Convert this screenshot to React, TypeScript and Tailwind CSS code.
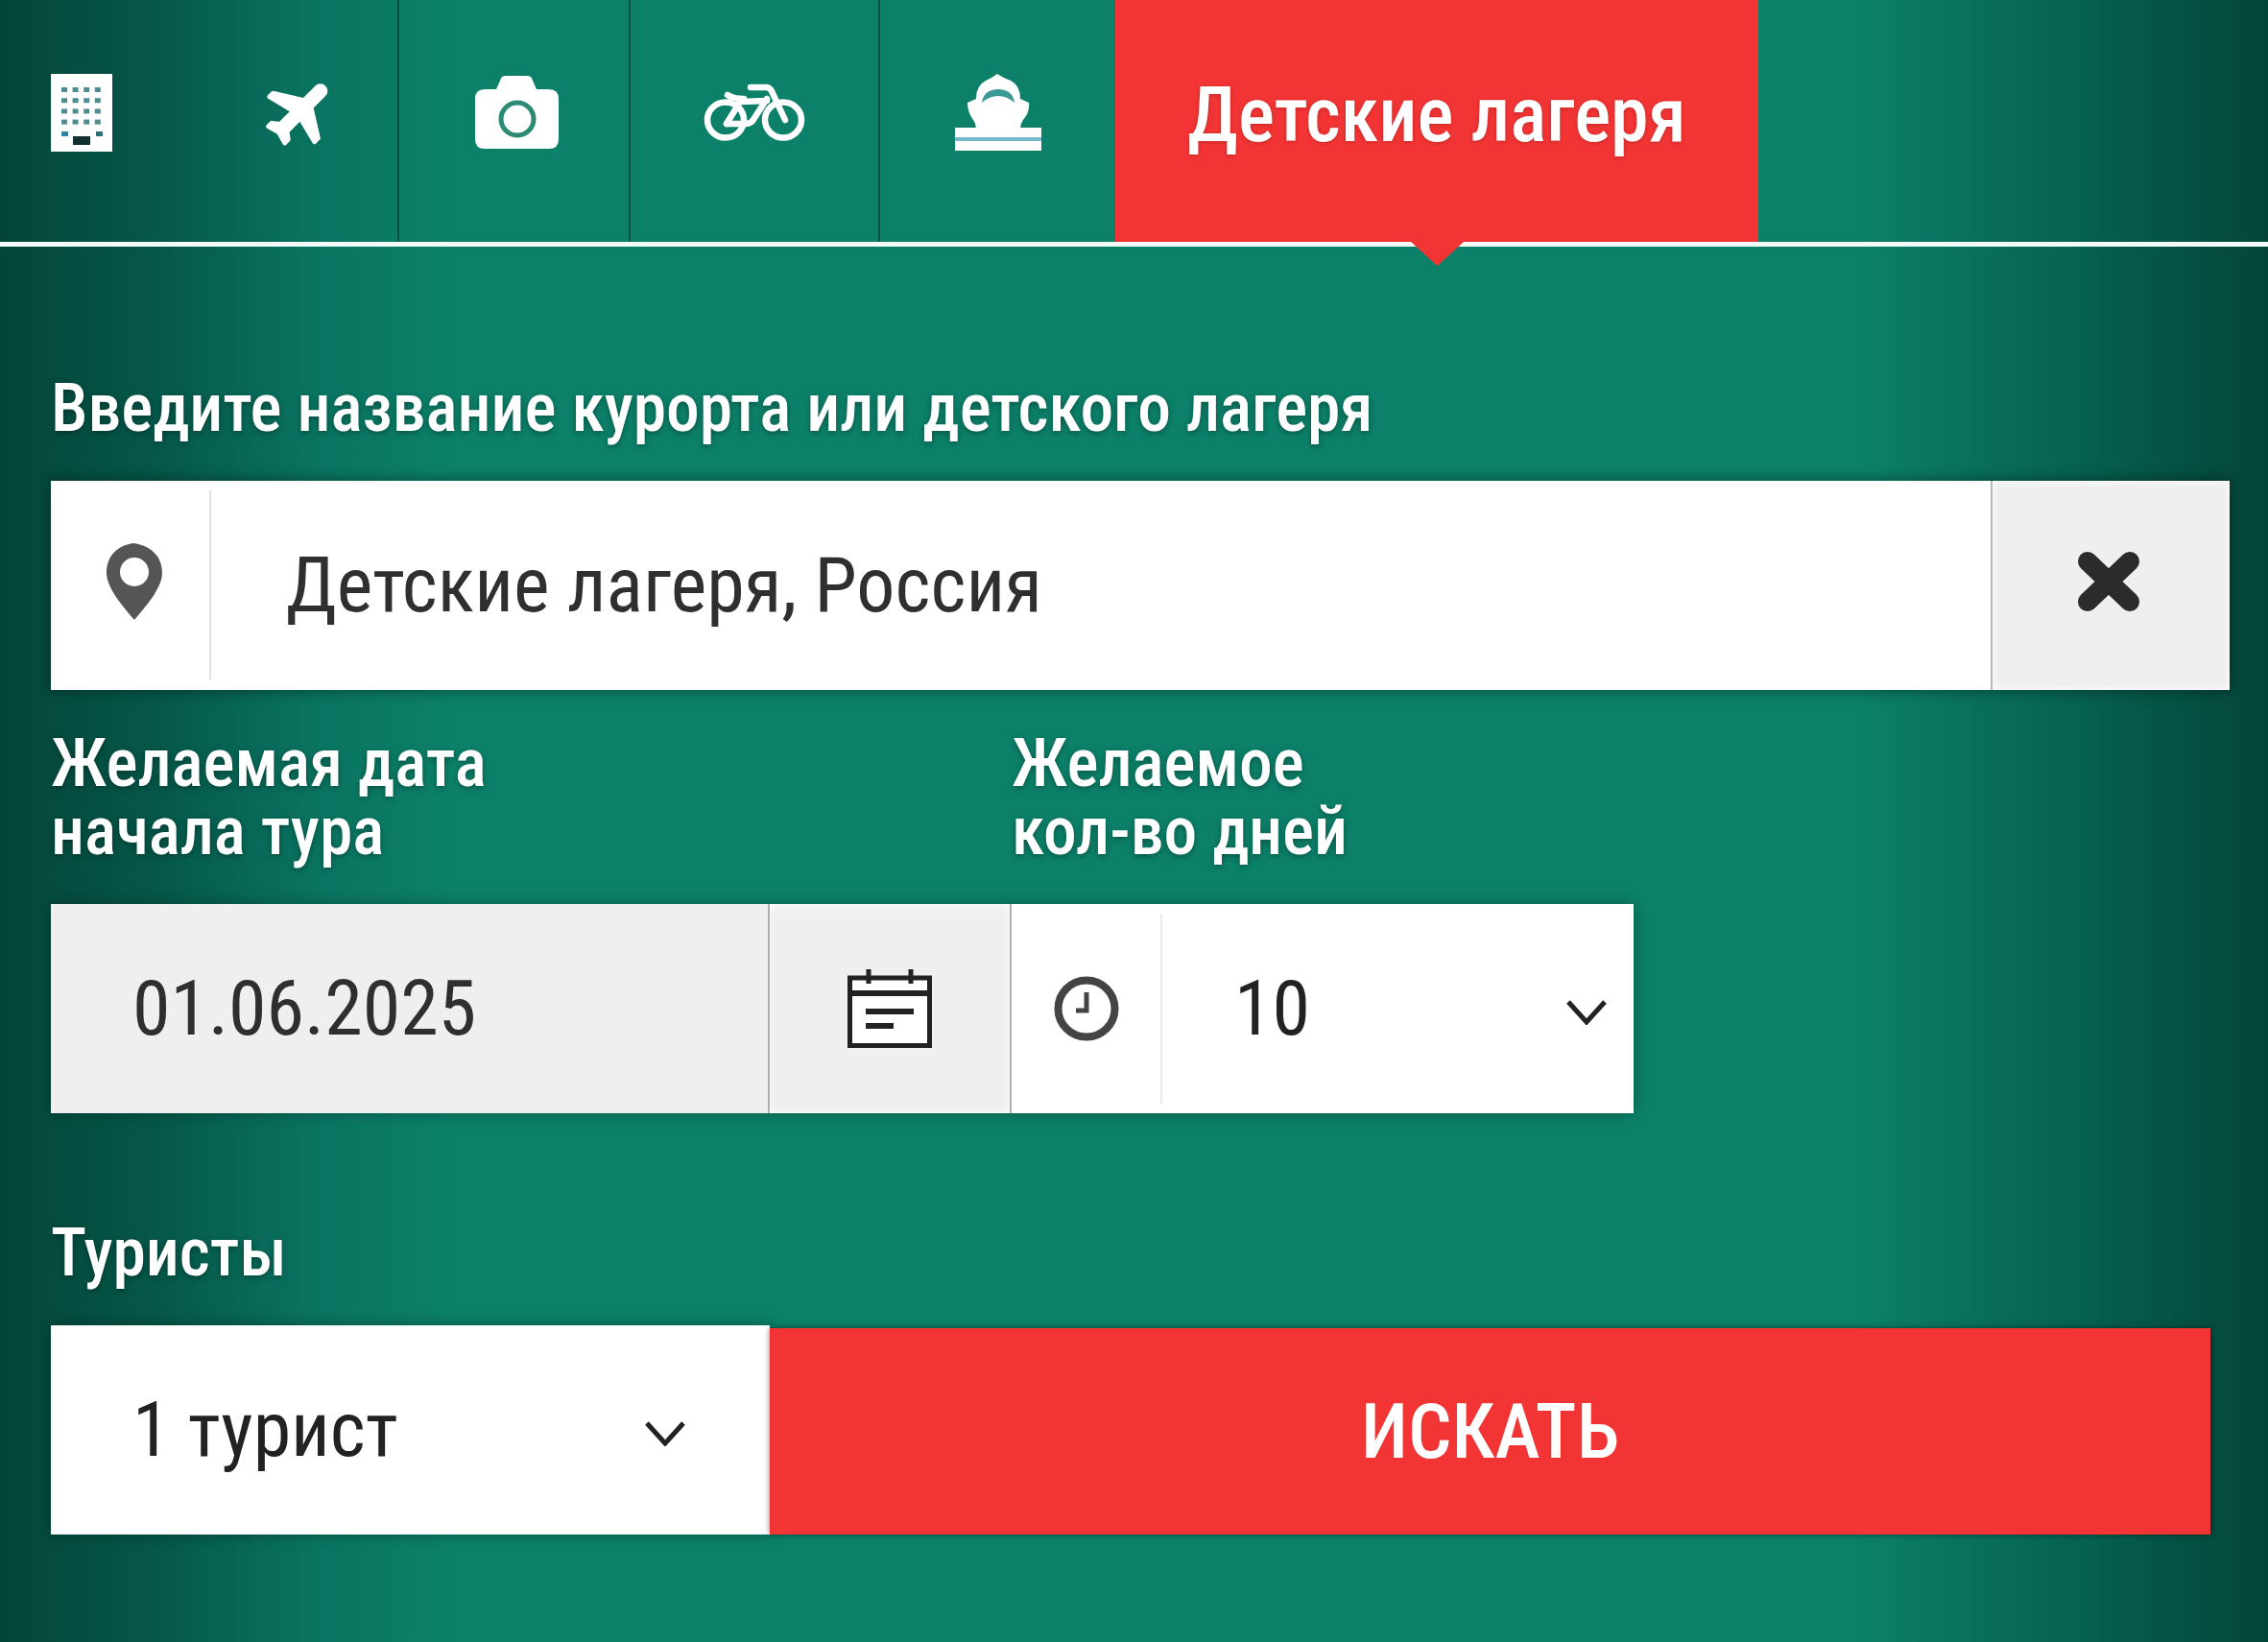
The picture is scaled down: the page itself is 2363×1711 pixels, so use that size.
import type { ReactNode } from 'react';

const fontClass = "font-['Roboto','Liberation_Sans',sans-serif] [font-stretch:75%]";

function HotelIcon() {
  const rows = [0, 1, 2, 3];
  const cols = [0, 1, 2, 3];
  return (
    <svg width="64" height="81" viewBox="0 0 64 81">
      <rect width="64" height="81" fill="#ffffff" />
      {rows.map((r) =>
        cols.map((c) => (
          <rect key={`${r}-${c}`} x={11 + c * 11.6} y={14 + r * 11.2} width="6" height="5" fill="#4f8c90" />
        )),
      )}
      <rect x="11" y="60" width="7" height="5" fill="#2f83a0" />
      <rect x="47" y="60" width="7" height="5" fill="#2f6f70" />
      <rect x="23" y="65" width="18" height="9" fill="#12302e" />
    </svg>
  );
}

function PlaneIcon() {
  return (
    <svg width="84" height="84" viewBox="0 0 24 24" className="rotate-45">
      <path
        d="M21 15.5v-1.6l-8-5V3.5c0-.83-.67-1.5-1.5-1.5S10 2.67 10 3.5v5.4l-8 5v1.6l8-2V19l-2 1.5V22l3.5-1 3.5 1v-1.5L13 19v-5.5z"
        fill="#ffffff"
        stroke="#ffffff"
        strokeWidth="1.3"
        strokeLinejoin="round"
      />
    </svg>
  );
}

function CameraIcon() {
  return (
    <svg width="87" height="76" viewBox="0 0 87 76">
      <path
        d="M10 14h12l4-9q1-5 6-5h22q5 0 6 5l4 9h13q10 0 10 10v42q0 10-10 10H10Q0 76 0 66V24q0-10 10-10z"
        fill="#ffffff"
      />
      <circle cx="44" cy="45" r="17" fill="#ffffff" stroke="#2c8a74" strokeWidth="5" />
    </svg>
  );
}

function BikeIcon() {
  return (
    <svg width="106" height="60" viewBox="0 0 106 60" fill="none" stroke="#ffffff" strokeWidth="6.5" strokeLinecap="round" strokeLinejoin="round">
      <ellipse cx="23" cy="38" rx="19" ry="18.5" />
      <ellipse cx="83" cy="38" rx="19" ry="18.5" />
      <path d="M24 42h20q6 0 9-6l13-20" />
      <path d="M24 42l14-23 28-1" />
      <path d="M49 4h16q4 0 6 4l14 30" />
      <path d="M25 12q6 4 17 4" />
    </svg>
  );
}

function ShipIcon() {
  return (
    <svg width="90" height="80" viewBox="0 0 90 80">
      <path
        d="M44 0q6 4 14 7 10 5 10 19l9 4q1 10-6 18-3 4-3 9H22q0-5-3-9-6-8-6-18l9-4Q22 12 32 7q7-3 12-7z"
        fill="#ffffff"
      />
      <path d="M28 30q2-14 17-14t17 14q-8-7-17-7t-17 7z" fill="#3b9a96" />
      <rect x="0" y="56" width="90" height="24" fill="#ffffff" />
      <rect x="0" y="66" width="90" height="4" fill="#75b9cc" />
    </svg>
  );
}

function PinIcon() {
  return (
    <svg width="60" height="80" viewBox="0 0 60 80">
      <path
        fillRule="evenodd"
        d="M29 0c16 2 30 12 30 31 0 16-18 36-29 49C19 67 1 47 1 31 1 12 14 2 29 0zm1 15a15 15 0 1 0 0 30 15 15 0 0 0 0-30z"
        fill="#555555"
      />
    </svg>
  );
}

function CloseIcon() {
  return (
    <svg width="70" height="66" viewBox="0 0 70 66" stroke="#2b2b2b" strokeWidth="20" strokeLinecap="round">
      <path d="M13 12l44 42M57 12L13 54" />
    </svg>
  );
}

function CalendarIcon() {
  return (
    <svg width="88" height="82" viewBox="0 0 88 82" fill="none" stroke="#222222">
      <rect x="2.5" y="9" width="83" height="70.5" strokeWidth="5" fill="#ffffff" />
      <path d="M2 25h84" strokeWidth="6" />
      <path d="M22 0v15M66 0v15" strokeWidth="5" />
      <path d="M19 44h50" strokeWidth="6" />
      <path d="M19 59h29" strokeWidth="6" />
    </svg>
  );
}

function ClockIcon() {
  return (
    <svg width="68" height="68" viewBox="0 0 68 68" fill="none" stroke="#444444">
      <circle cx="34" cy="34" r="29.5" strokeWidth="8" />
      <path d="M34 17v19H23" strokeWidth="5" />
    </svg>
  );
}

function ChevronIcon({ width, height }: { width: number; height: number }) {
  return (
    <svg width={width} height={height} viewBox="0 0 42 26" fill="none" stroke="#222222" strokeWidth="5" className="mt-[7px]">
      <path d="M2 2l19 21L40 2" />
    </svg>
  );
}

function Tab({ children, className }: { children: ReactNode; className: string }) {
  return <div className={`flex h-full items-center justify-center pb-[18px] ${className}`}>{children}</div>;
}

function FieldLabel({ children }: { children: ReactNode }) {
  return (
    <div className={`text-[69.5px] leading-[71px] font-medium text-white [text-shadow:0_2px_6px_rgba(0,0,0,0.35)] ${fontClass}`}>
      {children}
    </div>
  );
}

export default function App() {
  return (
    <main className="h-[1711px] w-[2363px] overflow-hidden bg-[linear-gradient(90deg,#044539_0%,#05584a_7%,#0a7461_14%,#0c8069_20%,#0c8069_82%,#066050_92%,#044539_100%)]">
      {/* tabs */}
      <nav className="flex h-[257px] border-b-[5px] border-[#f2fbf8]">
        <Tab className="w-[208px] justify-start pl-[53px]">
          <HotelIcon />
        </Tab>
        <Tab className="w-[208px] border-r-2 border-[#0a4f43] pl-[5px]">
          <PlaneIcon />
        </Tab>
        <Tab className="w-[241px] border-r-2 border-[#0a4f43] pl-[5px]">
          <CameraIcon />
        </Tab>
        <Tab className="w-[260px] border-r-2 border-[#0a4f43]">
          <BikeIcon />
        </Tab>
        <Tab className="w-[245px]">
          <ShipIcon />
        </Tab>
        <div className="relative flex h-[252px] w-[670px] items-center justify-center bg-[#f23434] pb-[12px]">
          <span className={`text-[80px] font-[470] text-white [text-shadow:0_1px_4px_rgba(0,0,0,0.2)] ${fontClass}`}>Детские лагеря</span>
          <div className="absolute top-full left-[308px] h-[25px] w-[55px] bg-[#f23434] [clip-path:polygon(0_0,100%_0,50%_100%)]" />
        </div>
      </nav>

      <form className="px-[53px] pr-[40px]">
        <div className="pt-[133px] pb-[40px]">
          <FieldLabel>Введите название курорта или детского лагеря</FieldLabel>
        </div>

        {/* destination */}
        <div className="flex h-[218px] bg-white shadow-[0_0_14px_rgba(0,0,0,0.45)]">
          <div className="my-[10px] flex w-[167px] items-center justify-center border-r-2 border-[#e4e4e4] pb-[8px] pl-[8px]">
            <PinIcon />
          </div>
          <div className={`flex flex-1 items-center pl-[78px] text-[80px] text-[#2f2f2f] ${fontClass}`}>
            Детские лагеря, Россия
          </div>
          <div className="flex w-[249px] items-center justify-center border-l-2 border-[#b9b9b9] bg-[#efefef] pr-[6px] pb-[8px] shadow-[inset_0_0_10px_#ffffff]">
            <CloseIcon />
          </div>
        </div>

        {/* dates */}
        <div className="flex pt-[41px] pb-[40px]">
          <div className="w-[1001px]">
            <FieldLabel>
              Желаемая дата
              <br />
              начала тура
            </FieldLabel>
          </div>
          <FieldLabel>
            Желаемое
            <br />
            кол-во дней
          </FieldLabel>
        </div>

        <div className="flex h-[218px] w-[1649px] shadow-[0_0_14px_rgba(0,0,0,0.3)]">
          <div className={`flex w-[747px] items-center bg-[#efefef] pl-[85px] text-[80px] text-[#2f2f2f] ${fontClass}`}>
            01.06.2025
          </div>
          <div className="flex w-[254px] items-center justify-center border-x-2 border-[#b0b0b0] bg-[#efefef] shadow-[inset_0_0_10px_#ffffff]">
            <CalendarIcon />
          </div>
          <div className="flex w-[157px] bg-white">
            <div className="my-[10px] flex w-full items-center justify-center border-r-2 border-[#e9e9e9]">
              <ClockIcon />
            </div>
          </div>
          <div className={`flex flex-1 items-center justify-between bg-white pr-[28px] pl-[75px] text-[80px] text-[#222222] ${fontClass}`}>
            <span>10</span>
            <ChevronIcon width={42} height={26} />
          </div>
        </div>

        {/* tourists */}
        <div className="pt-[110px] pb-[40px]">
          <FieldLabel>Туристы</FieldLabel>
        </div>

        <div className="flex items-stretch pr-[20px]">
          <div className={`flex h-[218px] w-[749px] items-center justify-between bg-white pr-[87px] pl-[85px] text-[80px] text-[#222222] shadow-[0_0_14px_rgba(0,0,0,0.35)] ${fontClass}`}>
            <span>1 турист</span>
            <ChevronIcon width={44} height={26} />
          </div>
          <button
            type="button"
            className={`mt-[3px] flex h-[215px] flex-1 items-center justify-center bg-[#f23434] text-[80px] font-medium text-white shadow-[0_0_6px_rgba(0,0,0,0.5)] ${fontClass}`}
          >
            ИСКАТЬ
          </button>
        </div>
      </form>
    </main>
  );
}
